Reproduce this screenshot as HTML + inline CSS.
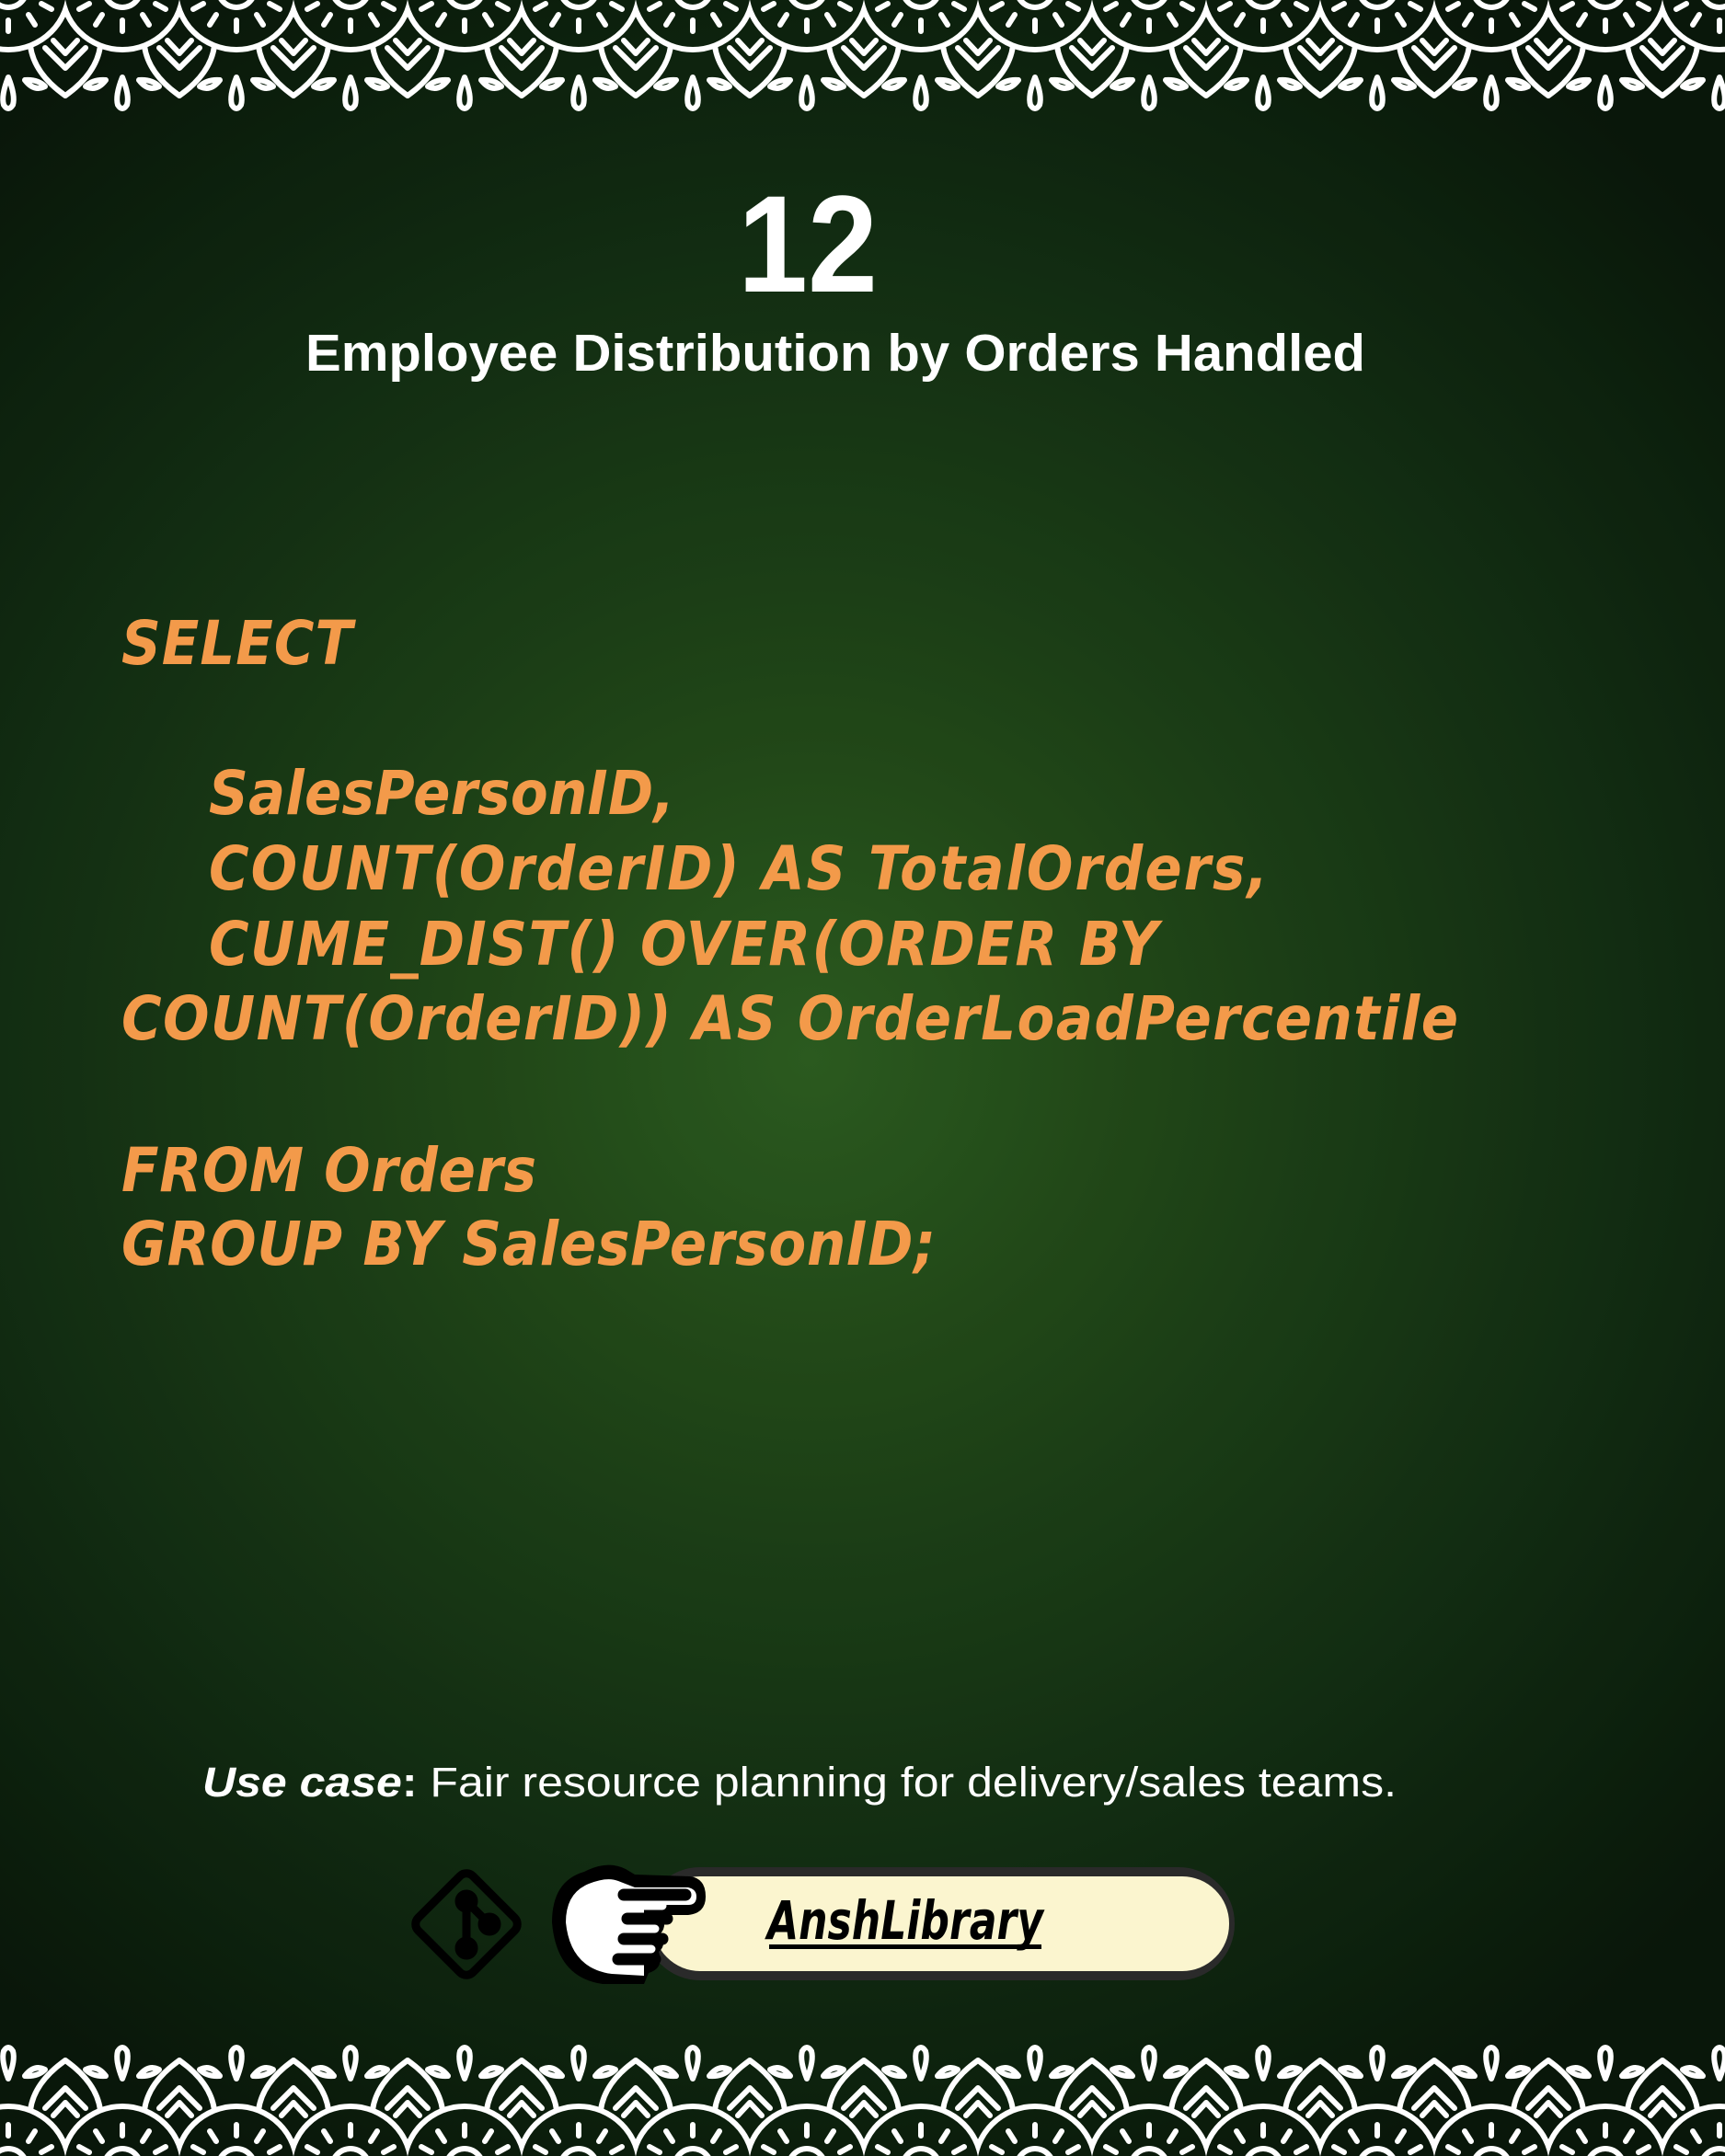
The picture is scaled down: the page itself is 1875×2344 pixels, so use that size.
<!DOCTYPE html>
<html><head><meta charset="utf-8"><style>
html,body{margin:0;padding:0;width:1875px;height:2344px;overflow:hidden;background:#0c1c0c}
svg{display:block}
</style></head><body>
<svg width="1875" height="2344" viewBox="0 0 1875 2344" xmlns="http://www.w3.org/2000/svg">
<defs>
<radialGradient id="bg" cx="880" cy="1150" r="1350" gradientUnits="userSpaceOnUse">
<stop offset="0" stop-color="#2f6222"/>
<stop offset="0.3" stop-color="#224a19"/>
<stop offset="0.65" stop-color="#143114"/>
<stop offset="1" stop-color="#0a190b"/>
</radialGradient>
<pattern id="orn" width="124" height="130" patternUnits="userSpaceOnUse" patternTransform="translate(-53,0)">
<g fill="none" stroke="#fff" stroke-width="6" stroke-linecap="round" stroke-linejoin="round">
<circle cx="62" cy="-12" r="66"/>
<path d="M42 -12 A20 20 0 0 0 82 -12"/>
<path d="M62 22 V34 M40 16 L33 27 M84 16 L91 27 M26 4 L15 10 M98 4 L109 10"/>
<path d="M-38 50 Q-34 80 0 104 Q34 80 38 50"/>
<path d="M86 50 Q90 80 124 104 Q158 80 162 50"/>
<path d="M-22 52 L0 74 L22 52 M-13 44 L0 58 L13 44"/>
<path d="M102 52 L124 74 L146 52 M111 44 L124 58 L137 44"/>
<path d="M62 84 Q54 104 57 114 Q62 122 67 114 Q70 104 62 84 Z"/>
<path d="M44 87 Q30 86 22 94 Q34 100 44 87 Z"/>
<path d="M80 87 Q94 86 102 94 Q90 100 80 87 Z"/>
</g>
</pattern>
</defs>
<rect width="1875" height="2344" fill="url(#bg)"/>
<rect width="1875" height="2344" fill="#000" opacity="0.08"/>
<rect x="0" y="0" width="1875" height="128" fill="url(#orn)"/>
<g transform="translate(0,2344) scale(1,-1)"><rect x="0" y="0" width="1875" height="128" fill="url(#orn)"/></g>

<g fill="#fff" font-family="Liberation Sans, Arial, sans-serif" font-weight="bold">
<text x="802" y="317" font-size="150" textLength="152" lengthAdjust="spacingAndGlyphs">12</text>
<text x="332" y="403" font-size="57" textLength="1152" lengthAdjust="spacingAndGlyphs">Employee Distribution by Orders Handled</text>
</g>

<g fill="#f39a4a" font-family="DejaVu Sans Condensed, DejaVu Sans, sans-serif" font-style="italic" font-weight="bold" font-size="66">
<text x="132" y="722" textLength="251" lengthAdjust="spacing">SELECT</text>
<text x="227" y="885" textLength="506" lengthAdjust="spacing">SalesPersonID,</text>
<text x="227" y="967" textLength="1151" lengthAdjust="spacing">COUNT(OrderID) AS TotalOrders,</text>
<text x="227" y="1049" textLength="1032" lengthAdjust="spacing">CUME_DIST() OVER(ORDER BY</text>
<text x="132" y="1130" textLength="1453" lengthAdjust="spacing">COUNT(OrderID)) AS OrderLoadPercentile</text>
<text x="132" y="1295" textLength="451" lengthAdjust="spacing">FROM Orders</text>
<text x="132" y="1375" textLength="885" lengthAdjust="spacing">GROUP BY SalesPersonID;</text>
</g>

<text x="220" y="1953" fill="#fff" font-family="Liberation Sans, Arial, sans-serif" font-size="45" textLength="1298" lengthAdjust="spacingAndGlyphs"><tspan font-weight="bold" font-style="italic">Use case</tspan><tspan font-weight="bold">:</tspan> Fair resource planning for delivery/sales teams.</text>

<!-- git icon -->
<g fill="none" stroke="#000" stroke-width="9" stroke-linecap="round" stroke-linejoin="round">
<rect x="465" y="2050" width="84" height="84" rx="10" transform="rotate(45 507 2092)"/>
<path d="M507 2067 V2118 M507 2067 L532 2092"/>
<circle cx="507" cy="2067" r="8"/>
<circle cx="532" cy="2092" r="8"/>
<circle cx="507" cy="2118" r="8"/>
</g>

<!-- pill -->
<rect x="700" y="2030" width="642" height="123" rx="61" fill="#2a2a2a"/>
<rect x="710" y="2040" width="626" height="103" rx="51" fill="#fbf5cf"/>
<text x="834" y="2108" font-family="DejaVu Sans Condensed, DejaVu Sans, sans-serif" font-style="italic" font-weight="bold" font-size="58" fill="#000" textLength="300" lengthAdjust="spacingAndGlyphs">AnshLibrary</text>
<rect x="836" y="2114" width="296" height="5" fill="#000"/>

<!-- hand -->
<g>
<path d="M600 2090 Q600 2045 635 2035 Q660 2022 680 2032 L690 2038 L750 2040 Q767 2042 767 2062 Q767 2080 748 2082 L720 2082 Q725 2095 718 2102 Q725 2115 716 2122 Q722 2140 705 2145 L700 2157 L655 2157 Q605 2150 600 2090 Z" fill="#000"/>
<path d="M615 2090 Q615 2058 640 2048 Q660 2040 672 2045 L690 2052 L748 2052 Q757 2054 757 2062 Q757 2071 748 2071 L700 2071 L700 2148 L665 2146 Q620 2140 615 2090 Z" fill="#fff"/>
<g stroke="#000" stroke-width="13" stroke-linecap="round">
<path d="M678 2060 L745 2060"/>
<path d="M682 2086 L725 2086"/>
<path d="M678 2108 L720 2108"/>
<path d="M672 2130 L712 2130"/>
</g>
<g stroke="#fff" stroke-width="9" stroke-linecap="round">
<path d="M700 2072 L720 2072 M700 2097 L712 2097 M700 2119 L708 2119"/>
</g>
</g>
</svg>
</body></html>
